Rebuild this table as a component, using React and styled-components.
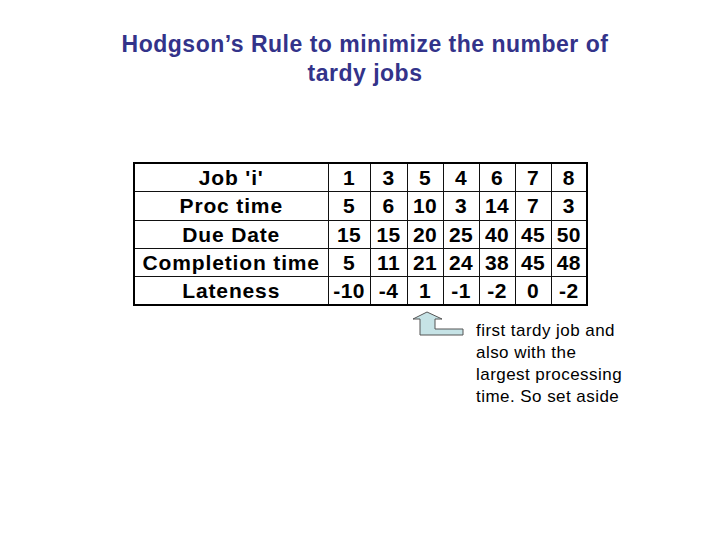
import React from "react"
import styled, { createGlobalStyle } from "styled-components"

const GlobalStyle = createGlobalStyle`
  html, body {
    margin: 0;
    padding: 0;
    background: #fff;
  }
  body {
    font-family: "Liberation Sans", Arial, sans-serif;
  }
`

const Slide = styled.div`
  width: 720px;
  height: 540px;
  background: #fff;
  padding-top: 30px;
  box-sizing: border-box;
`

const Title = styled.h1`
  margin: 0 0 0 85px;
  width: 560px;
  text-align: center;
  color: #33338a;
  font-size: 23px;
  line-height: 29px;
  font-weight: bold;
  letter-spacing: 0.5px;
`

const Table = styled.table`
  margin: 74px 0 0 133px;
  border-collapse: collapse;
  border: 2px solid #000;
  table-layout: fixed;
  width: 453px;
`

const Cell = styled.td`
  height: 27.3px;
  padding: 0;
  border: 1.5px solid #111;
  text-align: center;
  vertical-align: middle;
  font-size: 21px;
  font-weight: bold;
  letter-spacing: ${(p) => (p.$label ? "0.85px" : "0.3px")};
  color: #000;
  line-height: 27px;
  white-space: nowrap;
  overflow: hidden;
`

const Note = styled.div`
  display: flex;
  align-items: flex-start;
  margin-left: 412px;
`

const Arrow = styled.svg`
  margin-top: 5px;
  flex: none;
`

const NoteText = styled.p`
  margin: 14px 0 0 10px;
  width: 170px;
  font-size: 17px;
  line-height: 22px;
  letter-spacing: 0.45px;
  color: #000;
`

const widths = [194, 42, 37, 36, 36, 36, 36, 36]

const rows = [
  ["Job 'i'", 1, 3, 5, 4, 6, 7, 8],
  ["Proc time", 5, 6, 10, 3, 14, 7, 3],
  ["Due Date", 15, 15, 20, 25, 40, 45, 50],
  ["Completion time", 5, 11, 21, 24, 38, 45, 48],
  ["Lateness", -10, -4, 1, -1, -2, 0, -2],
]

export default function App() {
  return (
    <>
      <GlobalStyle />
      <Slide>
        <Title>
          Hodgson’s Rule to minimize the number of
          <br />
          tardy jobs
        </Title>
        <Table>
          <colgroup>
            {widths.map((w, i) => (
              <col key={i} style={{ width: w }} />
            ))}
          </colgroup>
          <tbody>
            {rows.map((row) => (
              <tr key={row[0]}>
                {row.map((v, i) => (
                  <Cell key={i} $label={i === 0}>
                    {v}
                  </Cell>
                ))}
              </tr>
            ))}
          </tbody>
        </Table>
        <Note>
          <Arrow width="54" height="28" viewBox="0 0 54 28">
            <path
              d="M15 1 L30 8 L23 8 L23 18 L51 18 L51 24 L8 24 L8 8 L1 8 Z"
              fill="#c6e3e6"
              stroke="#555"
              strokeWidth="1"
              strokeLinejoin="miter"
            />
          </Arrow>
          <NoteText>
            first tardy job and
            <br />
            also with the
            <br />
            largest processing
            <br />
            time. So set aside
          </NoteText>
        </Note>
      </Slide>
    </>
  )
}
